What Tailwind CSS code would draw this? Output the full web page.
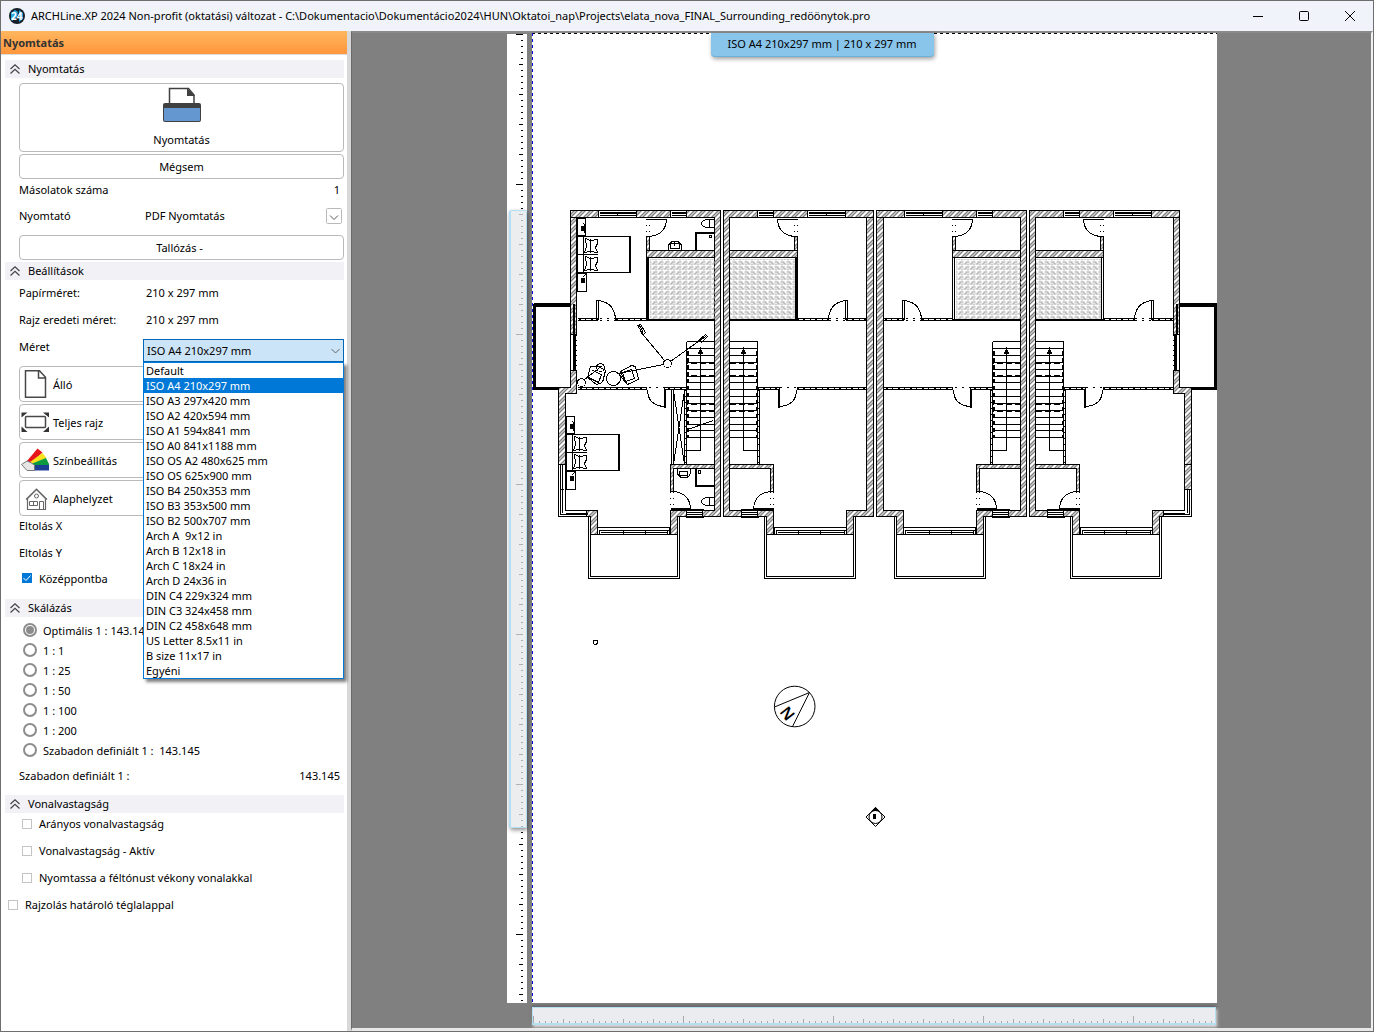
<!DOCTYPE html>
<html lang="hu">
<head>
    <meta charset="UTF-8">
    <meta name="viewport" content="width=device-width, initial-scale=1.0">
    <title>ARCHLine.XP 2024</title>
    <script src="https://cdn.jsdelivr.net/npm/@tailwindcss/browser@4"></script>
</head>
<body class="flex min-h-screen flex-col border border-[#6e6e6e] bg-white font-['Noto_Sans','Open_Sans',sans-serif] text-[11px] leading-[15px] text-black">

    <!-- Title bar -->
    <header class="flex h-[30px] shrink-0 items-center bg-[#f0f3f9] pb-px pl-2">
        <svg class="size-4 shrink-0" viewBox="0 0 16 16">
            <circle cx="8" cy="8" r="8" fill="#15202b"/>
            <path d="M2 5l4-3 3 2-1 5-5 4-1-2zM10 2l4 3v6l-4 3z" fill="#2aa5e0"/>
            <text x="2" y="12" font-size="10" font-weight="700" fill="#fff">24</text>
        </svg>
        <h1 class="ml-[6px] flex-1 truncate text-[11px]">ARCHLine.XP 2024 Non-profit (oktatási) változat - C:\Dokumentacio\Dokumentácio2024\HUN\Oktatoi_nap\Projects\elata_nova_FINAL_Surrounding_redöönytok.pro</h1>
        <div class="flex">
            <button class="flex h-[29px] w-[46px] items-center justify-center" aria-label="Minimize">
                <svg class="size-[10px]" viewBox="0 0 10 10" fill="none" stroke="#000"><path d="M0 5.500h10"/></svg>
            </button>
            <button class="flex h-[29px] w-[46px] items-center justify-center" aria-label="Maximize">
                <svg class="size-[10px]" viewBox="0 0 10 10" fill="none" stroke="#000"><rect x=".5" y=".5" width="9" height="9" rx="1"/></svg>
            </button>
            <button class="flex h-[29px] w-[46px] items-center justify-center" aria-label="Close">
                <svg class="size-[10px]" viewBox="0 0 10 10" fill="none" stroke="#000"><path d="M0 0l10 10M10 0L0 10"/></svg>
            </button>
        </div>
    </header>

    <div class="flex flex-1">
        <!-- Print settings -->
        <aside class="w-[346px] shrink-0">
            <h2 class="h-6 border-b border-[#dcdcdc] bg-linear-to-b from-[#ffb65e] to-[#ff963c] pl-[2px] text-[11px] leading-6 font-bold text-[#333]">Nyomtatás</h2>

            <div class="pr-[3px] pl-1">
                <h3 class="mt-[5px] flex h-[18px] items-center gap-2 bg-[#f1f1f6] pb-px pl-[5px]">
                    <svg class="size-[10px]" viewBox="0 0 10 10" fill="none" stroke="#444" stroke-width="1.200"><path d="M.5 5L5 .8 9.500 5M.5 9.500L5 5.300l4.500 4.200"/></svg>
                    <span>Nyomtatás</span>
                </h3>
                <div class="pl-[14px]">
                    <button class="mt-[5px] flex h-[69px] w-full flex-col items-center justify-between rounded border border-[#b9b9b9] pt-[3px] pb-1">
                        <svg class="h-9 w-10" viewBox="0 0 40 36">
                            <path d="M7.500 18V1.500h19L32 8v10" fill="#fff" stroke="#404040" stroke-width="1.500"/>
                            <path d="M25 1l8 8h-8z" fill="#404040"/>
                            <rect x="1" y="16" width="38" height="19" rx="2" fill="#404040"/>
                            <path d="M2 21h36v12q0 1-1 1H3q-1 0-1-1z" fill="#6496d0"/>
                        </svg>
                        <span>Nyomtatás</span>
                    </button>
                    <button class="mt-[2px] block h-[25px] w-full rounded border border-[#b9b9b9]">Mégsem</button>
                    <div class="flex h-5 items-center justify-between pr-1">
                        <label for="copies">Másolatok száma</label>
                        <input id="copies" class="w-10 text-right" value="1">
                    </div>
                    <div class="flex h-8 items-center">
                        <label for="printer" class="w-[126px]">Nyomtató</label>
                        <div class="relative flex-1">
                            <select id="printer" class="block w-full appearance-none">
                                <option>PDF Nyomtatás</option>
                            </select>
                            <svg class="pointer-events-none absolute top-0 right-[2px] size-4" viewBox="0 0 16 16" fill="none"><rect x=".5" y=".5" width="15" height="15" rx="1" stroke="#b9b9b9"/><path d="M4 7.500l4 4 4-4" stroke="#555"/></svg>
                        </div>
                    </div>
                    <button class="mt-1 block h-[25px] w-full rounded border border-[#b9b9b9] pr-1">Tallózás -</button>
                </div>

                <h3 class="mt-[2px] flex h-[18px] items-center gap-2 bg-[#f1f1f6] pb-px pl-[5px]">
                    <svg class="size-[10px]" viewBox="0 0 10 10" fill="none" stroke="#444" stroke-width="1.200"><path d="M.5 5L5 .8 9.500 5M.5 9.500L5 5.300l4.500 4.200"/></svg>
                    <span>Beállítások</span>
                </h3>
                <div class="-mt-px pl-[14px]">
                    <div class="flex h-[27px] items-center"><span class="w-[127px]">Papírméret:</span><span>210 x 297 mm</span></div>
                    <div class="flex h-[27px] items-center"><span class="w-[127px]">Rajz eredeti méret:</span><span>210 x 297 mm</span></div>
                    <div class="flex h-[33px]">
                        <label for="size" class="w-[124px] pt-[6px]">Méret</label>
                        <div class="relative mt-[6px] h-[23px] flex-1">
                            <select id="size" class="block h-[23px] w-full appearance-none border border-[#0067b8] bg-[#cce4f7] pl-[3px]">
                                <option>ISO A4 210x297 mm</option>
                            </select>
                            <svg class="pointer-events-none absolute top-[7px] right-1 size-[9px]" viewBox="0 0 9 9" fill="none" stroke="#666"><path d="M.5 3l4 4 4-4"/></svg>
                            <ul role="listbox" class="absolute top-[23px] left-0 z-10 w-full border border-[#0078d7] bg-white shadow-[3px_3px_3px_#00000080] *:h-[15px] *:pl-[2px] *:whitespace-pre">
                                <li role="option">Default</li>
                                <li role="option" aria-selected="true" class="bg-[#0078d7] text-white">ISO A4 210x297 mm</li>
                                <li role="option">ISO A3 297x420 mm</li>
                                <li role="option">ISO A2 420x594 mm</li>
                                <li role="option">ISO A1 594x841 mm</li>
                                <li role="option">ISO A0 841x1188 mm</li>
                                <li role="option">ISO OS A2 480x625 mm</li>
                                <li role="option">ISO OS 625x900 mm</li>
                                <li role="option">ISO B4 250x353 mm</li>
                                <li role="option">ISO B3 353x500 mm</li>
                                <li role="option">ISO B2 500x707 mm</li>
                                <li role="option">Arch A  9x12 in</li>
                                <li role="option">Arch B 12x18 in</li>
                                <li role="option">Arch C 18x24 in</li>
                                <li role="option">Arch D 24x36 in</li>
                                <li role="option">DIN C4 229x324 mm</li>
                                <li role="option">DIN C3 324x458 mm</li>
                                <li role="option">DIN C2 458x648 mm</li>
                                <li role="option">US Letter 8.5x11 in</li>
                                <li role="option">B size 11x17 in</li>
                                <li role="option">Egyéni</li>
                            </ul>
                        </div>
                    </div>
                    <div class="flex flex-col gap-[2px]">
                        <button class="flex h-9 w-full items-center gap-1 rounded border border-[#b9b9b9] pl-px">
                            <svg class="size-7" viewBox="0 0 28 28" fill="none" stroke="#484848" stroke-width="1.500"><path d="M4.500.8h14l6 6.500v20h-20zM17.500 1v7h7"/></svg>
                            <span>Álló</span>
                        </button>
                        <button class="flex h-9 w-full items-center gap-1 rounded border border-[#b9b9b9] pl-px">
                            <svg class="size-7" viewBox="0 0 28 28"><rect x="4.500" y="8.500" width="20" height="11" rx="1" fill="none" stroke="#484848" stroke-width="1.500"/><path d="M.5 4.500h6l-6 5zM28 4.500h-6l6 5zM.5 24h6l-6-5.500zM28 24h-6l6-5.500z" fill="#333"/></svg>
                            <span>Teljes rajz</span>
                        </button>
                        <button class="flex h-9 w-full items-center gap-1 rounded border border-[#b9b9b9] pl-px">
                            <svg class="size-7" viewBox="0 0 28 28">
                                <path d="M6 15L16.500 2.500l5 4L10 17z" fill="#e8141c"/>
                                <path d="M9 16L21.500 7l4 5L12 18z" fill="#f7e01d"/>
                                <path d="M10 18l15-6 3 6v1H11z" fill="#0b9a3f"/>
                                <path d="M13 19h15v5.500H13z" fill="#1c3f94"/>
                                <path d="M6 15l3.500 1.500 4 2.500v5.500H6L.5 18.500z" fill="#e6e6e6" stroke="#777"/>
                            </svg>
                            <span>Színbeállítás</span>
                        </button>
                        <button class="flex h-9 w-full items-center gap-1 rounded border border-[#b9b9b9] pl-px">
                            <svg class="size-7" viewBox="0 0 28 28" fill="none" stroke="#666"><path d="M6.500 25.500v-11l9-9 9 9v11zM5 15.500L15.500 5 26 15.500" stroke-width="1.200"/><circle cx="15.500" cy="12" r="2"/><path d="M8.500 17.500h8v4h-8zM12.500 17.500v4M18.500 25v-7.500h4V25"/></svg>
                            <span>Alaphelyzet</span>
                        </button>
                    </div>
                    <div class="-mt-1 flex h-[27px] items-center">Eltolás X</div>
                    <div class="flex h-[27px] items-center">Eltolás Y</div>
                    <label class="flex h-[22px] items-center gap-[7px] pt-[2px] pl-[3px]">
                        <span class="relative flex">
                            <input type="checkbox" class="size-[10px] appearance-none bg-[#0078d7]" checked>
                            <svg class="absolute inset-0 size-[10px]" viewBox="0 0 10 10" fill="none" stroke="#fff"><path d="M1.500 5l2.500 2.500 4.500-5"/></svg>
                        </span>
                        <span>Középpontba</span>
                    </label>
                </div>

                <h3 class="mt-[11px] flex h-[18px] items-center gap-2 bg-[#f1f1f6] pb-px pl-[5px]">
                    <svg class="size-[10px]" viewBox="0 0 10 10" fill="none" stroke="#444" stroke-width="1.200"><path d="M.5 5L5 .8 9.500 5M.5 9.500L5 5.300l4.500 4.200"/></svg>
                    <span>Skálázás</span>
                </h3>
                <div class="pt-[3px] pl-[14px]">
                    <fieldset class="pl-1 *:flex *:h-5 *:items-center *:gap-[6px]">
                        <label><input type="radio" name="scale" class="size-[14px] appearance-none rounded-full border-2 border-[#8c8c8c] bg-[#8c8c8c] bg-clip-content p-px" checked>Optimális 1 : 143.145</label>
                        <label><input type="radio" name="scale" class="size-[14px] appearance-none rounded-full border-2 border-[#8c8c8c]">1 : 1</label>
                        <label><input type="radio" name="scale" class="size-[14px] appearance-none rounded-full border-2 border-[#8c8c8c]">1 : 25</label>
                        <label><input type="radio" name="scale" class="size-[14px] appearance-none rounded-full border-2 border-[#8c8c8c]">1 : 50</label>
                        <label><input type="radio" name="scale" class="size-[14px] appearance-none rounded-full border-2 border-[#8c8c8c]">1 : 100</label>
                        <label><input type="radio" name="scale" class="size-[14px] appearance-none rounded-full border-2 border-[#8c8c8c]">1 : 200</label>
                        <label><input type="radio" name="scale" class="size-[14px] appearance-none rounded-full border-2 border-[#8c8c8c]"><span class="whitespace-pre">Szabadon definiált 1 :  143.145</span></label>
                    </fieldset>
                    <div class="-mt-px flex h-8 items-center justify-between pr-1">
                        <label for="custom">Szabadon definiált 1 :</label>
                        <input id="custom" class="w-16 text-right" value="143.145">
                    </div>
                </div>

                <h3 class="mt-1 flex h-[18px] items-center gap-2 bg-[#f1f1f6] pb-px pl-[5px]">
                    <svg class="size-[10px]" viewBox="0 0 10 10" fill="none" stroke="#444" stroke-width="1.200"><path d="M.5 5L5 .8 9.500 5M.5 9.500L5 5.300l4.500 4.200"/></svg>
                    <span>Vonalvastagság</span>
                </h3>
                <div class="mt-[-3px] pl-[17px] *:flex *:h-[27px] *:items-center *:gap-[7px]">
                    <label><input type="checkbox" class="size-[10px] appearance-none border border-[#c4c4c4]">Arányos vonalvastagság</label>
                    <label><input type="checkbox" class="size-[10px] appearance-none border border-[#c4c4c4]">Vonalvastagság - Aktív</label>
                    <label><input type="checkbox" class="size-[10px] appearance-none border border-[#c4c4c4]">Nyomtassa a féltónust vékony vonalakkal</label>
                </div>
                <label class="flex h-[27px] items-center gap-[7px] pl-[3px]"><input type="checkbox" class="size-[10px] appearance-none border border-[#c4c4c4]">Rajzolás határoló téglalappal</label>
            </div>
        </aside>

        <div class="w-1 shrink-0 bg-[#d8d8d8]"></div>

        <!-- Print preview -->
        <main class="relative flex flex-1 flex-col items-center border-t-2 border-r-2 border-b-3 border-l border-t-[#8a8a8a] border-r-[#f0f0f0] border-b-[#e8e8e8] border-l-[#6a6a6a] bg-[#808080]">
            <div class="flex gap-[5px]">
                <div class="relative mt-px w-5 bg-white">
                    <svg class="h-[969px] w-5" viewBox="0 0 20 969" stroke="#000" shape-rendering="crispEdges">
                        <path d="M15 0V969" stroke-width="2" stroke-dasharray="1 5"/>
                        <path d="M14 0V969" stroke-width="4" stroke-dasharray="1 29"/>
                        <path d="M12.500 0V969" stroke-width="7" stroke-dasharray="1 149"/>
                    </svg>
                    <div class="absolute top-[176px] left-[2px] h-[618px] w-[18px] rounded-xs border border-l-2 border-[#b4def2] bg-[#e6e7e9]/76 shadow-[1px_2px_4px_#00000070]"></div>
                </div>

                <svg class="h-[970px] w-[685px] bg-white" viewBox="532 33 685 970" fill="none" stroke="#000" shape-rendering="crispEdges">
                    <defs>
                        <pattern id="hatch" width="8" height="8" patternUnits="userSpaceOnUse">
                            <rect width="8" height="8" fill="#fff" stroke="none"/>
                            <path d="M-1 9L9-1M-1 1l2-2M7 9l2-2M-1 4l5-5M2 9l7-7"/>
                        </pattern>
                        <pattern id="hatchFlip" width="8" height="8" patternUnits="userSpaceOnUse">
                            <rect width="8" height="8" fill="#fff" stroke="none"/>
                            <path d="M-1-1L9 9M7-1l2 2M-1 7l2 2M2-1l7 7M-1 4l5 5"/>
                        </pattern>
                        <pattern id="tiles" width="6" height="5" patternUnits="userSpaceOnUse">
                            <path d="M0 1h3M3 3.500h3M3 1v2M1 3v2" stroke="#a0a0a0"/>
                        </pattern>

                        <!-- One flat; the others are its mirrored or shifted copies -->
                        <g id="unit">
                            <!-- walls take the hatch of the use element -->
                            <path d="M723 210H873V217H729V510H773V534H766V516H723z"/>
                            <path d="M729 250H797V257H729zM794 236H797V250H794z"/>
                            <path d="M729 464H773V491H770V468H729z"/>
                            <g fill="#fff">
                                <path d="M757 210H773V217H757zM807 210H845V217H807zM741 510H757V516H741zM774 527H846V534H774z"/>
                            </g>
                            <g fill="none">
                                <path d="M758 212H772M758 213H772M758 215H772M808 212H844M808 213H844M808 215H844M826 213V215"/>
                                <path d="M740 509H758M741 512H757M741 514H757M740 517H758"/>
                                <path d="M775 530H845M777 532H843M776 530V533M798 530V533M820 530V533M844 530V533"/>
                            </g>
                            <rect x="729" y="258" width="65" height="60" fill="url(#tiles)" stroke="none"/>
                            <g fill="none">
                                <!-- balcony -->
                                <path d="M764 516V578H855V516M766 534V576H853V534"/>
                                <!-- tiled room -->
                                <path d="M795 257V320M797 257V320"/>
                                <path d="M729 319H797" stroke-width="2"/>
                                <!-- thin partitions -->
                                <path d="M797 318H828V320H797M866 318H846V320H866"/>
                                <path d="M757 387H779V389H757M866 387H797V389H866"/>
                                <path d="M797 319H828M846 319H866M757 388H779M797 388H866" stroke-dasharray="1 4 2 5"/>
                                <path d="M757 341V464M759 389V464"/>
                                <path d="M758 389V464" stroke-dasharray="1 5"/>
                                <!-- openings -->
                                <path d="M794 218V236M797 218V236M770 491V508M773 491V508" stroke-dasharray="1 5"/>
                                <path d="M828 318H846M828 320H846M779 387H797" stroke-dasharray="2 5"/>
                                <!-- doors -->
                                <path d="M797 219H777M777 219Q778 235 795 236"/>
                                <path d="M845 319V300H847V319M845 300Q829 302 828 319"/>
                                <path d="M778 389V407M779 389V407M779 406Q796 405 796 389"/>
                                <path d="M773 508H753M773 509H753V508Q754 492 771 491"/>
                                <!-- stairs -->
                                <path d="M729 341H757M729 348H757M729 355H757M729 362H757M729 369H757M729 376H757M729 382H757M729 389H757M729 396H757M729 403H757M729 410H757M729 417H757M729 424H757M729 430H757M729 437H757"/>
                                <path d="M729 363H757M729 375H757M729 404H757M729 411H757" stroke-dasharray="6 3"/>
                                <path d="M756 350V437" stroke-width="2" stroke-dasharray="4 3"/>
                                <path d="M743 350V450H757"/>
                                <path d="M743 348l-2 5h4z" fill="#000"/>
                            </g>
                        </g>

                        <!-- party wall of the two middle flats -->
                        <path id="party" d="M866 217H873V516H853V534H846V510H866z"/>

                        <!-- outer end of the row of houses -->
                        <g id="end">
                            <path d="M570 217H576V334H570zM586 510H597V534H590V516H586z"/>
                            <path d="M570 370H576V393H565V464H558V387H570z"/>
                            <g fill="none">
                                <path d="M558 464V516H587M560 464V514H587M562 464V512M565 464V510H587M560 489H563"/>
                                <path d="M565 513H587" stroke-width="2"/>
                                <path d="M573 303V334" stroke-width="2"/>
                                <path d="M574 334V370" stroke-width="3"/>
                                <path d="M570 334V370M576 334V370" stroke-dasharray="1 4"/>
                                <path d="M570 304H533" stroke-width="4"/>
                                <path d="M534 303V389M533 388H558" stroke-width="3"/>
                                <path d="M570 303V387"/>
                            </g>
                        </g>

                        <g id="bed">
                            <path d="M0 0H53V36H0zM52 0V36M6 0V36M0 18H20"/>
                            <path d="M8 2l5 2 7-1v4l-2 4 2 5-7-1-6 1 2-6zM13 2v14M8 20l5 2 7-1v4l-2 4 2 5-7-1-6 1 2-6zM13 20v14"/>
                            <path d="M0-18H8V-1H0zM0 37H9V55H0z"/>
                            <path d="M4-10h3v4H4zM4 42h3v4H4z" fill="#000"/>
                            <path d="M6-6l2 3M6-13l2 3M5 41l3-3"/>
                        </g>
                    </defs>

                    <!-- sheet margin -->
                    <path d="M532 33.500H1217" stroke-dasharray="3 3"/>
                    <path d="M532.500 33V1003" stroke="#0000e0" stroke-dasharray="3 3"/>

                    <g transform="translate(.5 .5)">
                        <use href="#unit" fill="url(#hatch)"/>
                        <use href="#party" fill="url(#hatch)"/>
                        <use href="#unit" fill="url(#hatchFlip)" transform="translate(1443 0) scale(-1 1)"/>
                        <use href="#unit" fill="url(#hatchFlip)" transform="translate(1749 0) scale(-1 1)"/>
                        <use href="#party" fill="url(#hatchFlip)" transform="translate(1749 0) scale(-1 1)"/>
                        <use href="#unit" fill="url(#hatch)" transform="translate(306 0)"/>
                        <use href="#end" fill="url(#hatch)"/>
                        <use href="#end" fill="url(#hatchFlip)" transform="translate(1749 0) scale(-1 1)"/>
                        <path d="M1184 464H1191V489H1184z" fill="url(#hatch)"/>
                        <path d="M796 257V320M647 257V320" stroke-width="2"/>

                        <!-- furniture of the first flat -->
                        <use href="#bed" x="577" y="236"/>
                        <use href="#bed" x="566" y="434"/>
                        <path d="M695 250V232H713M696 250V233H713M709 235h2v2h-2zM695 468V486H713M696 468V485H713M698 470h2v3h-2z"/>
                        <path d="M713 219h-4q-8 0-8 4t8 4h4M713 497h-4q-8 0-8 4t8 4h4M709 219v8M709 497v8"/>
                        <path d="M668 249v-4a7 7 0 0 1 13 0v4M670 243h9v5h-9zM674 240v5"/>
                        <path d="M677 468v5a7 7 0 0 0 13 0v-5M679 471h8v4h-8z"/>
                        <path d="M671 389V464M673 389V464M684 389V464M673 390L684 464M684 390L673 464M687 429l26-9"/>
                        <!-- lamp -->
                        <circle cx="667" cy="363" r="4" fill="#fff"/>
                        <path d="M664 360L640 331M670 361L702 338M663 364L618 373"/>
                        <path d="M637 325l3-1 5 8-2 2zM698 340l7-6 2 2-6 6z"/><path d="M639 325l4 7M700 340l6-5"/>
                        <circle cx="613" cy="378" r="7"/><circle cx="581" cy="382" r="4"/>
                        <path d="M584 379l18-14"/><circle cx="600" cy="367" r="4"/>
                        <path d="M590 366l-3 11 9 7 6-2 3-12-7-4zM592 370l9 4-3 8-10-5M620 371l11-6 4 1 3 13-11 5-5-8zM622 372l9-3 3 9-9 3zM618 373l8 10"/>
                    </g>

                    <path d="M593.500 640.500h4v3l-2 1h-1l-1-1z"/>
                    <g shape-rendering="auto">
                        <circle cx="794.700" cy="706.500" r="20.300"/>
                        <path d="M774.500 707L809.500 692.500 792.500 726.500"/>
                        <text x="779" y="712" transform="rotate(52 779 712)" font-size="16" font-weight="600" fill="#000" stroke="none">N</text>
                        <path d="M875.500 807.500l9.500 9.500-9.500 9.500L866 817z"/>
                        <circle cx="875.500" cy="817" r="6.500" fill="#fff"/>
                        <path d="M875.500 807l4 4h-8zM873 814h3v5h-3z" fill="#000" stroke="none"/>
                    </g>
                </svg>
            </div>

            <!-- horizontal ruler -->
            <div class="mt-1 flex w-[710px] justify-end pr-px pb-[3px]">
                <div class="w-[684px] border border-b-2 border-[#b4def2] bg-[#ebecef] shadow-[1px_2px_3px_#ffffffd0,0_-1px_3px_#00000060]">
                    <svg class="block h-[15px] w-full" stroke="#aaa" shape-rendering="crispEdges">
                        <path d="M0 14H683" stroke-width="2" stroke-dasharray="1 5"/>
                        <path d="M0 13H683" stroke-width="4" stroke-dasharray="1 29"/>
                        <path d="M0 11.500H683" stroke-width="7" stroke-dasharray="1 149"/>
                    </svg>
                </div>
            </div>

            <!-- paper size badge -->
            <div class="absolute top-0 left-1/2 w-[223px] -translate-x-[151px] rounded-b-[4px] border-b border-[#6cb0d8] bg-[#89c4ea] pt-px pb-[2px] text-center leading-[20px] shadow-[1px_2px_4px_#00000060]">ISO A4 210x297 mm | 210 x 297 mm</div>
        </main>
    </div>
</body>
</html>
